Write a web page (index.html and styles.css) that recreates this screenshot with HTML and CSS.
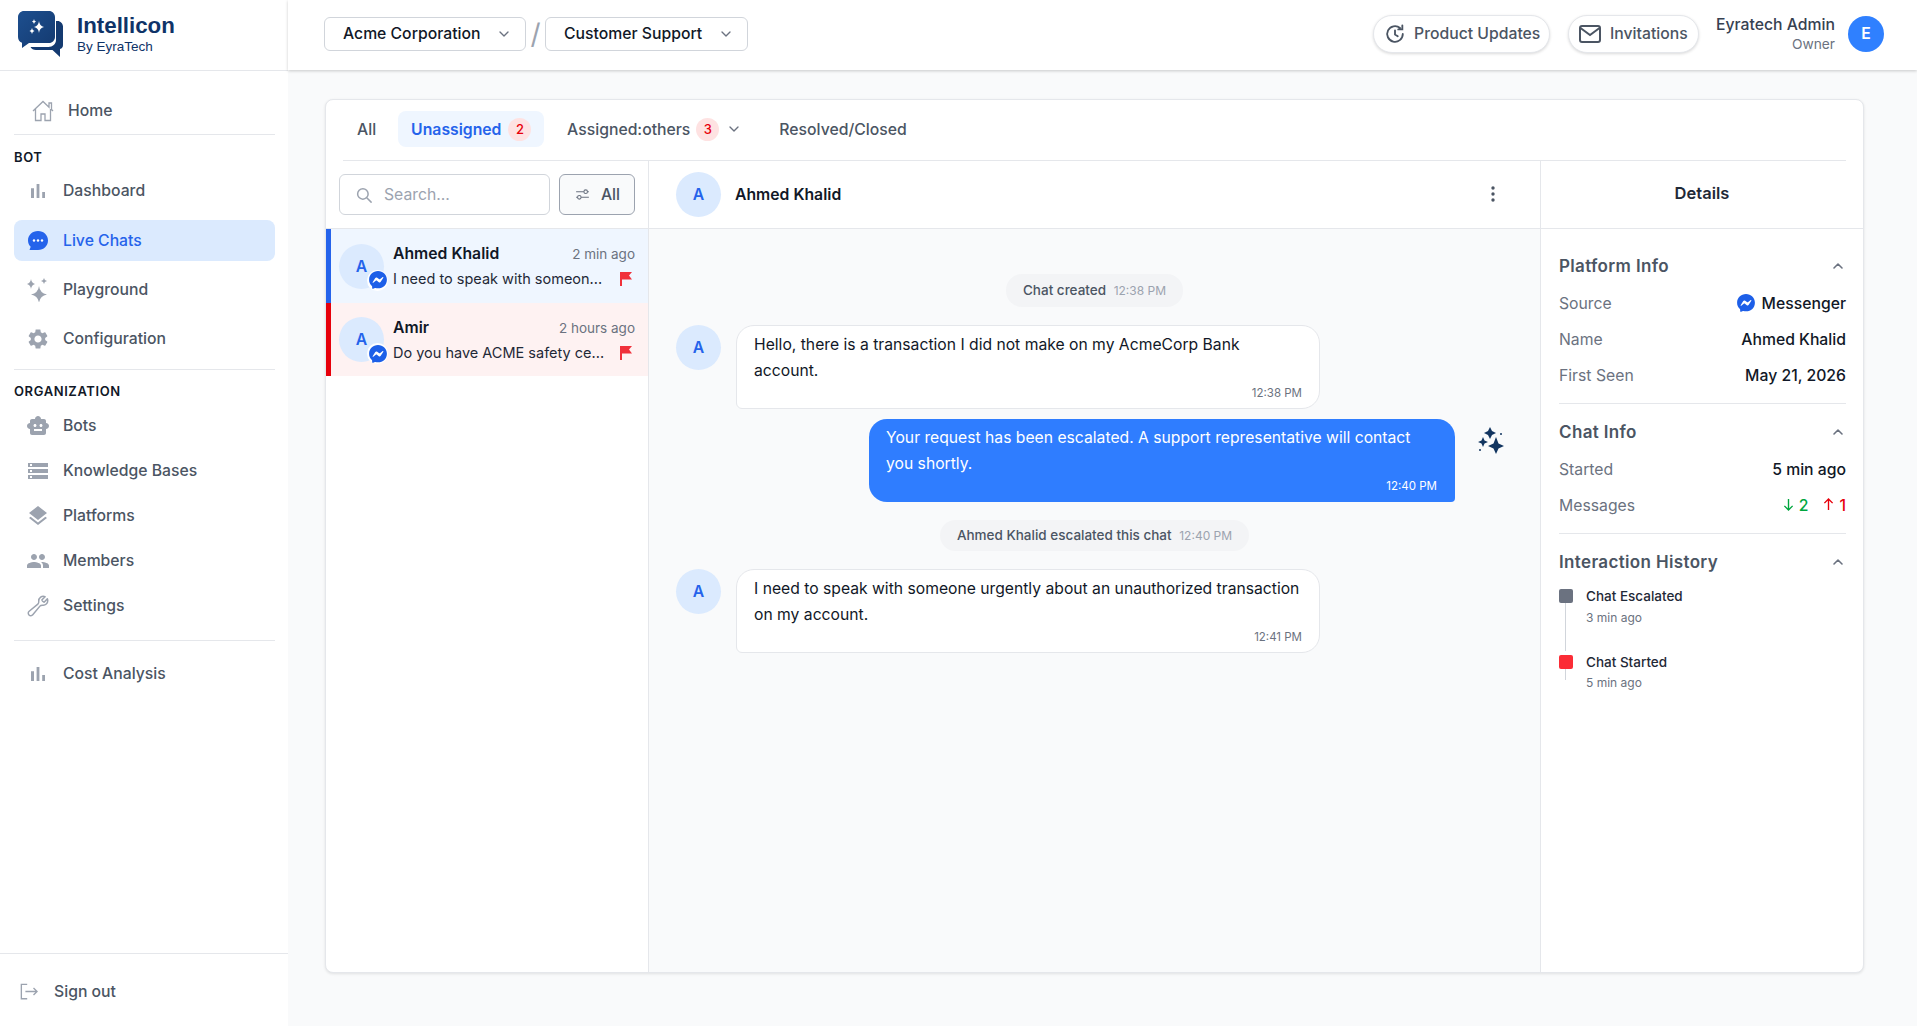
FILE: index.html
```html
<!DOCTYPE html>
<html lang="en">
<head>
  <meta charset="UTF-8">
  <title>Intellicon - Live Chats</title>
  <link rel="stylesheet" href="styles.css">
</head>
<body>
  <svg class="defs" width="0" height="0">
    <symbol id="i-bars" viewBox="0 0 24 24"><path d="M5 9.2h3V19H5zM10.6 5h2.800v14h-2.800zm5.600 8H19v6h-2.800z"/></symbol>
    <symbol id="i-gear" viewBox="0 0 24 24"><path d="M19.14 12.94c.04-.3.06-.61.06-.94 0-.32-.02-.64-.07-.94l2.03-1.58c.18-.14.23-.41.12-.61l-1.92-3.32c-.12-.22-.37-.29-.59-.22l-2.39.96c-.5-.38-1.03-.7-1.62-.94l-.36-2.54c-.04-.24-.24-.41-.48-.41h-3.84c-.24 0-.43.17-.47.41l-.36 2.54c-.59.24-1.13.57-1.62.94l-2.39-.96c-.22-.08-.47 0-.59.22L2.74 8.87c-.12.21-.08.47.12.61l2.03 1.58c-.05.3-.09.63-.09.94s.02.64.07.94l-2.03 1.58c-.18.14-.23.41-.12.61l1.92 3.32c.12.22.37.29.59.22l2.39-.96c.5.38 1.03.7 1.62.94l.36 2.54c.05.24.24.41.48.41h3.84c.24 0 .44-.17.47-.41l.36-2.54c.59-.24 1.13-.56 1.62-.94l2.39.96c.22.08.47 0 .59-.22l1.92-3.32c.12-.22.07-.47-.12-.61l-2.01-1.58zM12 15.6c-1.98 0-3.6-1.62-3.6-3.6s1.62-3.6 3.6-3.6 3.6 1.62 3.6 3.6-1.62 3.6-3.6 3.6z"/></symbol>
    <symbol id="i-bot" viewBox="0 0 24 24"><path d="M20 9V7c0-1.1-.9-2-2-2h-3c0-1.66-1.34-3-3-3S9 3.34 9 5H6c-1.1 0-2 .9-2 2v2c-1.66 0-3 1.34-3 3s1.34 3 3 3v4c0 1.1.9 2 2 2h12c1.1 0 2-.9 2-2v-4c1.66 0 3-1.34 3-3s-1.34-3-3-3zM7.5 11.5c0-.83.67-1.5 1.5-1.5s1.5.67 1.5 1.5S9.83 13 9 13s-1.5-.67-1.5-1.5zM16 17H8v-2h8v2zm-1-4c-.83 0-1.5-.67-1.5-1.5S14.17 10 15 10s1.5.67 1.5 1.5S15.83 13 15 13z"/></symbol>
    <symbol id="i-storage" viewBox="0 0 24 24"><path d="M2 20h20v-4H2v4zm2-3h2v2H4v-2zM2 4v4h20V4H2zm4 3H4V5h2v2zm-4 7h20v-4H2v4zm2-3h2v2H4v-2z"/></symbol>
    <symbol id="i-layers" viewBox="0 0 24 24"><path d="M11.99 18.54l-7.37-5.73L3 14.07l9 7 9-7-1.63-1.27-7.38 5.74zM12 16l7.36-5.73L21 9l-9-7-9 7 1.63 1.27L12 16z"/></symbol>
    <symbol id="i-people" viewBox="0 0 24 24"><path d="M16 11c1.66 0 2.99-1.34 2.99-3S17.66 5 16 5c-1.66 0-3 1.34-3 3s1.34 3 3 3zm-8 0c1.66 0 2.99-1.34 2.99-3S9.66 5 8 5C6.34 5 5 6.34 5 8s1.34 3 3 3zm0 2c-2.33 0-7 1.17-7 3.5V19h14v-2.5c0-2.33-4.67-3.5-7-3.5zm8 0c-.29 0-.62.02-.97.05 1.16.84 1.97 1.97 1.97 3.45V19h6v-2.5c0-2.33-4.67-3.5-7-3.5z"/></symbol>
    <symbol id="i-messenger" viewBox="2 2 20 20.200"><path d="M12 2C6.36 2 2 6.13 2 11.7c0 2.91 1.19 5.44 3.14 7.17.16.13.26.35.27.57l.05 1.78c.04.57.6.94 1.13.71l1.98-.87c.17-.06.36-.09.53-.06.9.27 1.9.4 2.9.4 5.64 0 10-4.13 10-9.7S17.64 2 12 2zm6 7.46l-2.94 4.67c-.47.73-1.47.92-2.17.37l-2.34-1.73a.6.6 0 0 0-.72 0l-3.16 2.4c-.42.33-.97-.17-.69-.62l2.94-4.67c.47-.73 1.47-.92 2.17-.4l2.34 1.76a.6.6 0 0 0 .72 0l3.16-2.4c.42-.33.97.17.69.62z"/></symbol>
    <symbol id="i-down" viewBox="0 0 24 24"><path d="M6 9l6 6 6-6" fill="none" stroke="currentColor" stroke-width="2" stroke-linecap="round" stroke-linejoin="round"/></symbol>
    <symbol id="i-up" viewBox="0 0 24 24"><path d="M6 15l6-6 6 6" fill="none" stroke="currentColor" stroke-width="2.400" stroke-linecap="round" stroke-linejoin="round"/></symbol>
    <symbol id="i-flag" viewBox="0 0 14 14"><path d="M1 0h12l-3 3.500L13 7.600H3V14H1z"/></symbol>
    <symbol id="i-sparkles" viewBox="0 0 27 27"><path d="M13 0l2 4 4 2-4 2-2 4-2-4-4-2 4-2zM19 10l2.500 6.500L27 19l-5.500 2.500L19 27l-2.500-5.500L11 19l5.500-2.500zM6 10l1.500 3.500L11 15l-3.500 1.500L6 20l-1.500-3.500L1 15l3.500-1.500z"/><circle cx="24" cy="7" r="1"/><circle cx="3" cy="23" r="1"/></symbol>
  </svg>

  <div class="app">
    <aside class="sidebar">
      <div class="brand">
        <svg class="brand-logo" viewBox="0 0 45 46">
          <defs>
            <linearGradient id="logo-grad" x1="0" y1="0" x2="1" y2="1">
              <stop offset="0" stop-color="#1d4f8f"/>
              <stop offset="1" stop-color="#143a70"/>
            </linearGradient>
          </defs>
          <path d="M38 10h1.500c3 0 5.500 2.500 5.500 5.500V34c0 2-1 3.500-3 4v8l-7.500-7H18c-2.500 0-4.500-1.200-5.500-3h18c4 0 7.500-3 7.500-7z" fill="#143a70"/>
          <path d="M6 0h25c3.300 0 6 2.700 6 6v20c0 3.300-2.700 6-6 6H11l-7 5v-5.300C1.700 31 0 29 0 26V6c0-3.300 2.700-6 6-6z" fill="url(#logo-grad)"/>
          <path d="M21 10Q21.500 15 26 16 21.500 17 21 22 20.500 17 16 16 20.500 15 21 10zM14 17Q14.300 19.500 16.500 20 14.300 20.500 14 23 13.700 20.500 11.500 20 13.700 19.500 14 17zM16 8Q16.200 10 18 10.500 16.200 11 16 13 15.800 11 14 10.500 15.800 10 16 8z" fill="#fff"/>
        </svg>
        <div>
          <div class="brand-name">Intellicon</div>
          <div class="brand-by">By EyraTech</div>
        </div>
      </div>

      <nav class="nav">
        <a class="nav-home">
          <svg class="icon-home" viewBox="0 0 24 24" fill="none" stroke="#9ca3af" stroke-width="1.300"><path d="M2 12L12 2.500l6 5.700V4h2.500v6.500L22 12M4.500 10v11.500h5.500V15h4v6.500h5.500V10"/></svg>
          Home
        </a>
        <hr class="nav-rule">

        <div class="nav-title">BOT</div>
        <a class="nav-item nav-dash"><svg class="nav-icon"><use href="#i-bars"/></svg>Dashboard</a>
        <a class="nav-item nav-live is-active">
          <svg class="nav-icon" viewBox="0 0 24 24"><path d="M12 2c5.800 0 10 4.200 10 9.500S17.800 21 12 21H3.500l1.200-3.200C3 16 2 14 2 11.500 2 6.200 6.200 2 12 2z" fill="#2563eb"/><circle cx="8" cy="11.500" r="1.200" fill="#fff"/><circle cx="12" cy="11.500" r="1.200" fill="#fff"/><circle cx="16" cy="11.500" r="1.200" fill="#fff"/></svg>
          Live Chats
        </a>
        <a class="nav-item nav-play"><svg class="nav-icon" viewBox="0 0 24 24"><path d="M13 8Q13.800 15 21 16.500 13.800 18 13 25 12.200 18 5 16.500 12.200 15 13 8zM5 1Q5.500 5 9 6 5.500 7 5 11 4.500 7 1 6 4.500 5 5 1zM18 0Q18.300 2.500 21 3 18.300 3.500 18 6 17.700 3.500 15 3 17.700 2.500 18 0z"/></svg>Playground</a>
        <a class="nav-item nav-conf"><svg class="nav-icon"><use href="#i-gear"/></svg>Configuration</a>
        <hr class="nav-rule nav-rule-org">

        <div class="nav-title nav-title-org">ORGANIZATION</div>
        <div class="nav-group">
          <a class="nav-item"><svg class="nav-icon"><use href="#i-bot"/></svg>Bots</a>
          <a class="nav-item"><svg class="nav-icon"><use href="#i-storage"/></svg>Knowledge Bases</a>
          <a class="nav-item"><svg class="nav-icon"><use href="#i-layers"/></svg>Platforms</a>
          <a class="nav-item"><svg class="nav-icon"><use href="#i-people"/></svg>Members</a>
          <a class="nav-item">
            <svg class="nav-icon nav-icon-line" viewBox="0 0 24 24"><path d="M21.750 6.750a4.500 4.500 0 01-4.884 4.484c-1.076-.091-2.264.071-2.950.904l-7.152 8.684a2.548 2.548 0 11-3.586-3.586l8.684-7.152c.833-.686.995-1.874.904-2.950a4.500 4.500 0 016.336-4.486l-3.276 3.276a3.004 3.004 0 002.250 2.250l3.276-3.276c.256.565.398 1.192.398 1.852z"/></svg>
            Settings
          </a>
        </div>
        <hr class="nav-rule nav-rule-last">
        <a class="nav-item"><svg class="nav-icon"><use href="#i-bars"/></svg>Cost Analysis</a>
      </nav>

      <a class="signout">
        <svg viewBox="0 0 20 18" fill="none" stroke="#9ca3af" stroke-width="1.500"><path d="M8 1H1.500v16H8M6 9h13M15 5l4 4-4 4"/></svg>
        Sign out
      </a>
    </aside>

    <div class="main">
      <header class="topbar">
        <div class="crumbs">
          <button class="select select-org">Acme Corporation<svg><use href="#i-down"/></svg></button>
          <span class="crumb-sep">/</span>
          <button class="select select-bot">Customer Support<svg><use href="#i-down"/></svg></button>
        </div>
        <div class="top-right">
          <button class="pill pill-updates">
            <svg viewBox="0 0 24 24" fill="none" stroke="#4b5563" stroke-width="2" stroke-linecap="round"><path d="M20.500 12a8.500 8.500 0 1 1-3-6.500M20 2.500V7h-4.500M12 8v4.500l3 2"/></svg>
            Product Updates
          </button>
          <button class="pill pill-invites">
            <svg viewBox="0 0 24 20" fill="none" stroke="#4b5563" stroke-width="2"><rect x="2" y="2" width="20" height="16" rx="2"/><path d="M2.500 4l9.500 7 9.500-7"/></svg>
            Invitations
          </button>
          <div class="user">
            <div class="user-name">Eyratech Admin</div>
            <div class="user-role">Owner</div>
          </div>
          <div class="user-avatar">E</div>
        </div>
      </header>

      <main class="content">
        <section class="card">
          <div class="tabs">
            <a class="tab tab-all">All</a>
            <a class="tab tab-active">Unassigned <span class="count">2</span></a>
            <a class="tab tab-others">Assigned:others <span class="count">3</span><svg class="tab-chevron"><use href="#i-down"/></svg></a>
            <a class="tab tab-resolved">Resolved/Closed</a>
          </div>

          <div class="panes">
            <div class="list-pane">
              <div class="list-tools">
                <div class="search">
                  <svg viewBox="0 0 24 24" fill="none" stroke="#9ca3af" stroke-width="2" stroke-linecap="round"><circle cx="10.500" cy="10.500" r="7"/><path d="M16 16l5.500 5.500"/></svg>
                  Search...
                </div>
                <button class="filter">
                  <svg viewBox="0 0 24 24" fill="none" stroke="#6b7280" stroke-width="1.500"><path d="M3 8h11M19 8h2M3 16h2M10 16h11"/><circle cx="16.500" cy="8" r="2.500"/><circle cx="7.500" cy="16" r="2.500"/></svg>
                  All
                </button>
              </div>

              <div class="conv conv-blue">
                <div class="avatar">A<span class="avatar-badge"><svg><use href="#i-messenger"/></svg></span></div>
                <div class="conv-body">
                  <div class="conv-top"><span class="conv-name">Ahmed Khalid</span><span class="conv-time">2 min ago</span></div>
                  <div class="conv-bottom"><span class="conv-text">I need to speak with someon...</span><svg class="conv-flag"><use href="#i-flag"/></svg></div>
                </div>
              </div>
              <div class="conv conv-red">
                <div class="avatar">A<span class="avatar-badge"><svg><use href="#i-messenger"/></svg></span></div>
                <div class="conv-body">
                  <div class="conv-top"><span class="conv-name">Amir</span><span class="conv-time">2 hours ago</span></div>
                  <div class="conv-bottom"><span class="conv-text">Do you have ACME safety ce...</span><svg class="conv-flag"><use href="#i-flag"/></svg></div>
                </div>
              </div>
            </div>

            <div class="chat-pane">
              <div class="chat-head">
                <div class="avatar">A</div>
                <span class="chat-name">Ahmed Khalid</span>
                <svg class="chat-more" viewBox="0 0 4 16" fill="#4b5563"><circle cx="2" cy="2" r="1.700"/><circle cx="2" cy="8" r="1.700"/><circle cx="2" cy="14" r="1.700"/></svg>
              </div>
              <div class="chat-log">
                <div class="sys sys-first"><span class="sys-pill">Chat created <small>12:38 PM</small></span></div>

                <div class="msg">
                  <div class="avatar">A</div>
                  <div class="bubble">
                    Hello, there is a transaction I did not make on my AcmeCorp Bank account.
                    <div class="stamp">12:38 PM</div>
                  </div>
                </div>

                <div class="msg msg-out">
                  <div class="bubble bubble-out">
                    Your request has been escalated. A support representative will contact you shortly.
                    <div class="stamp">12:40 PM</div>
                  </div>
                  <svg class="msg-ai"><use href="#i-sparkles"/></svg>
                </div>

                <div class="sys sys-mid"><span class="sys-pill">Ahmed Khalid escalated this chat <small>12:40 PM</small></span></div>

                <div class="msg">
                  <div class="avatar">A</div>
                  <div class="bubble">
                    I need to speak with someone urgently about an unauthorized transaction on my account.
                    <div class="stamp">12:41 PM</div>
                  </div>
                </div>
              </div>
            </div>

            <aside class="details-pane">
              <div class="details-head">Details</div>
              <div class="details-body">
                <div class="section">
                  <div class="section-head">Platform Info<svg><use href="#i-up"/></svg></div>
                  <div class="row"><span class="row-key">Source</span><span class="row-val row-source"><svg><use href="#i-messenger"/></svg>Messenger</span></div>
                  <div class="row"><span class="row-key">Name</span><span class="row-val">Ahmed Khalid</span></div>
                  <div class="row"><span class="row-key">First Seen</span><span class="row-val">May 21, 2026</span></div>
                </div>
                <div class="section">
                  <div class="section-head">Chat Info<svg><use href="#i-up"/></svg></div>
                  <div class="row"><span class="row-key">Started</span><span class="row-val">5 min ago</span></div>
                  <div class="row">
                    <span class="row-key">Messages</span>
                    <span class="row-val row-counts">
                      <span class="in">
                        <svg viewBox="0 0 12 14" fill="none" stroke="currentColor" stroke-width="1.500"><path d="M6 1v12M1.500 8.500L6 13l4.500-4.500"/></svg>2
                      </span>
                      <span class="out">
                        <svg viewBox="0 0 12 14" fill="none" stroke="currentColor" stroke-width="1.500"><path d="M6 13V1M1.500 5.500L6 1l4.500 4.500"/></svg>1
                      </span>
                    </span>
                  </div>
                </div>
                <div class="section section-last">
                  <div class="section-head">Interaction History<svg><use href="#i-up"/></svg></div>
                  <div class="event">
                    <span class="event-dot"></span>
                    <div>
                      <div class="event-title">Chat Escalated</div>
                      <div class="event-time">3 min ago</div>
                    </div>
                  </div>
                  <div class="event event-red">
                    <span class="event-dot"></span>
                    <div>
                      <div class="event-title">Chat Started</div>
                      <div class="event-time">5 min ago</div>
                    </div>
                  </div>
                </div>
              </div>
            </aside>
          </div>
        </section>
      </main>
    </div>
  </div>
</body>
</html>
```

FILE: styles.css
```css
* {
  box-sizing: border-box;
}

body {
  margin: 0;
  background: #f9fafb;
  color: #111827;
  font-family: Inter, "Noto Sans", sans-serif;
  font-size: 15.750px;
  overflow: hidden;
}

button {
  font: inherit;
  cursor: pointer;
}

.defs {
  display: none;
}

.app {
  display: flex;
  height: 1026px;
}

/* sidebar */
.sidebar {
  display: flex;
  flex-direction: column;
  flex: 0 0 288px;
  background: #fff;
}

.brand {
  display: flex;
  align-items: center;
  gap: 14px;
  height: 71px;
  padding: 0 0 2px 18px;
  border-bottom: 1px solid #e5e7eb;
}

.brand-logo {
  width: 45px;
  height: 46px;
}

.brand-name {
  color: #0f3368;
  font-family: "Liberation Sans", sans-serif;
  font-size: 22.300px;
  font-weight: 700;
  line-height: 25px;
}

.brand-by {
  color: #0f3368;
  font-family: "Liberation Sans", sans-serif;
  font-size: 13.500px;
  line-height: 17px;
}

.nav {
  flex: 1;
  padding: 21px 13px 0 14px;
}

.nav a {
  color: #4b5563;
  font-weight: 500;
}

.nav-home {
  display: flex;
  align-items: center;
  gap: 13px;
  height: 37px;
  padding-left: 17px;
}

.icon-home {
  width: 24px;
  height: 24px;
}

.nav-rule {
  height: 1px;
  margin: 5px 0 0;
  border: 0;
  background: #e5e7eb;
}

.nav-rule-org {
  margin-top: 10px;
}

.nav-title {
  margin-top: 14px;
  color: #111827;
  font-size: 13px;
  font-weight: 600;
  line-height: 16px;
  letter-spacing: 0.6px;
}

.nav-title-org {
  margin-top: 13px;
}

.nav-item {
  display: flex;
  align-items: center;
  gap: 13px;
  height: 41px;
  padding-left: 12px;
  border-radius: 8px;
}

.nav-icon {
  flex: 0 0 24px;
  width: 24px;
  height: 24px;
  fill: #9ca3af;
}

.nav-icon-line {
  fill: none;
  stroke: #9ca3af;
  stroke-width: 1.500;
  stroke-linejoin: round;
}

.nav-dash {
  margin-top: 5px;
}

.nav-live {
  margin-top: 9px;
}

.nav-play,
.nav-conf {
  margin-top: 8px;
}

.is-active {
  background: #dbeafe;
}

.nav a.is-active {
  color: #2563eb;
}

.nav-group {
  margin-top: 8px;
}

.nav-group .nav-item {
  height: 37px;
  margin-bottom: 8px;
}

.nav-rule-last {
  margin: 16px 0 12px;
}

.signout {
  display: flex;
  align-items: center;
  gap: 16px;
  height: 73px;
  padding: 2px 0 0 20px;
  border-top: 1px solid #e5e7eb;
  color: #4b5563;
  font-weight: 500;
}

.signout svg {
  width: 18px;
  height: 17px;
}

/* top bar */
.main {
  display: flex;
  flex-direction: column;
  flex: 1;
  min-width: 0;
}

.topbar {
  display: flex;
  align-items: center;
  justify-content: space-between;
  flex: 0 0 70px;
  padding: 0 33px 3px 36px;
  background: #fff;
  box-shadow: 0 1px 3px rgba(0, 0, 0, 0.2);
}

.crumbs {
  display: flex;
  align-items: center;
}

.select {
  display: flex;
  align-items: center;
  justify-content: space-between;
  height: 34px;
  padding: 0 13px 0 18px;
  background: #fff;
  border: 1px solid #d1d5db;
  border-radius: 6px;
  color: #111827;
  font-weight: 500;
}

.select svg {
  width: 16px;
  height: 16px;
  color: #6b7280;
}

.select-org {
  width: 202px;
}

.select-bot {
  width: 203px;
}

.crumb-sep {
  width: 19px;
  color: #9ca3af;
  font-size: 28px;
  line-height: 30px;
  text-align: center;
}

.top-right {
  display: flex;
  align-items: center;
}

.pill {
  display: flex;
  align-items: center;
  height: 38px;
  background: #fff;
  border: 1px solid #e5e7eb;
  border-radius: 19px;
  box-shadow: 0 1px 3px rgba(0, 0, 0, 0.15);
  color: #4b5563;
  font-weight: 500;
}

.pill-updates {
  gap: 8px;
  width: 177px;
  padding-left: 10px;
}

.pill-updates svg {
  width: 22px;
  height: 22px;
}

.pill-invites {
  gap: 8px;
  width: 131px;
  margin-left: 18px;
  padding-left: 9px;
}

.pill-invites svg {
  width: 24px;
  height: 20px;
}

.user {
  margin-left: 17px;
  text-align: right;
}

.user-name {
  color: #374151;
  font-weight: 500;
  line-height: 20px;
}

.user-role {
  color: #6b7280;
  font-size: 13.750px;
  line-height: 18px;
}

.user-avatar {
  display: flex;
  align-items: center;
  justify-content: center;
  width: 36px;
  height: 36px;
  margin-left: 13px;
  background: #2f80ff;
  border-radius: 50%;
  color: #fff;
  font-weight: 600;
}

/* card */
.content {
  flex: 1;
  min-height: 0;
  padding: 29px 53px 53px 37px;
}

.card {
  display: flex;
  flex-direction: column;
  height: 100%;
  background: #fff;
  border: 1px solid #e5e7eb;
  border-radius: 8px;
  box-shadow: 0 1px 3px rgba(0, 0, 0, 0.1);
}

.tabs {
  display: flex;
  align-items: center;
  flex: 0 0 61px;
  margin: 0 17px;
  padding-bottom: 2px;
  border-bottom: 1px solid #e5e7eb;
  color: #4b5563;
  font-weight: 500;
}

.tab {
  display: flex;
  align-items: center;
  height: 36px;
}

.tab-all {
  margin-left: 14px;
}

.tab-active {
  gap: 7px;
  width: 146px;
  margin-left: 22px;
  padding-left: 13px;
  background: #eff6ff;
  border-radius: 8px;
  color: #2563eb;
  font-weight: 600;
}

.tab-others {
  gap: 6px;
  margin-left: 23px;
}

.tab-chevron {
  width: 16px;
  height: 16px;
  margin-left: 1px;
  color: #6b7280;
}

.tab-resolved {
  margin-left: 37px;
}

.count {
  display: flex;
  align-items: center;
  justify-content: center;
  width: 23px;
  height: 23px;
  background: #fee2e2;
  border-radius: 50%;
  color: #e7000b;
  font-size: 13px;
  font-weight: 500;
}

.panes {
  display: flex;
  flex: 1;
  min-height: 0;
}

.avatar {
  position: relative;
  display: flex;
  align-items: center;
  justify-content: center;
  flex: 0 0 45px;
  width: 45px;
  height: 45px;
  background: #dbeafe;
  border-radius: 50%;
  color: #2563eb;
  font-weight: 600;
}

/* conversation list */
.list-pane {
  flex: 0 0 323px;
  border-right: 1px solid #e5e7eb;
}

.list-tools {
  display: flex;
  align-items: center;
  gap: 9px;
  height: 68px;
  padding: 0 13px;
  border-bottom: 1px solid #e5e7eb;
}

.search {
  display: flex;
  align-items: center;
  gap: 11px;
  flex: 0 0 211px;
  height: 41px;
  padding-left: 15px;
  border: 1px solid #d1d5db;
  border-radius: 6px;
  color: #9ca3af;
}

.search svg {
  width: 18px;
  height: 18px;
}

.filter {
  display: flex;
  align-items: center;
  justify-content: center;
  gap: 10px;
  flex: 0 0 76px;
  height: 41px;
  padding: 0;
  background: #f9fafb;
  border: 1px solid #9ca3af;
  border-radius: 6px;
  color: #4b5563;
  font-weight: 500;
}

.filter svg {
  width: 17px;
  height: 17px;
}

.conv {
  display: flex;
  align-items: center;
  gap: 9px;
  height: 74px;
  padding: 0 13px 0 8px;
  border-left: 5px solid;
}

.conv-blue {
  background: #eff6ff;
  border-color: #2563eb;
}

.conv-red {
  background: #fef2f2;
  border-color: #e7000b;
  height: 73px;
}

.avatar-badge {
  position: absolute;
  right: -4px;
  bottom: -2px;
  display: flex;
  width: 21px;
  height: 21px;
  padding: 1.500px;
  background: #fff;
  border-radius: 50%;
}

.avatar-badge svg {
  width: 18px;
  height: 18px;
  fill: #1d5fe8;
}

.conv-body {
  flex: 1;
  min-width: 0;
  padding-top: 1px;
}

.conv-top,
.conv-bottom {
  display: flex;
  align-items: center;
  justify-content: space-between;
}

.conv-top {
  margin-bottom: 5px;
  line-height: 20px;
}

.conv-name {
  font-weight: 600;
}

.conv-time {
  color: #6b7280;
  font-size: 13.500px;
}

.conv-bottom {
  line-height: 20px;
}

.conv-text {
  color: #1f2937;
  font-size: 14.500px;
}

.conv-flag {
  width: 14px;
  height: 14px;
  margin-right: 2px;
  fill: #f0313b;
}

/* chat */
.chat-pane {
  display: flex;
  flex-direction: column;
  flex: 1;
  min-width: 0;
}

.chat-head {
  display: flex;
  align-items: center;
  flex: 0 0 68px;
  padding: 0 45px 1px 27px;
  border-bottom: 1px solid #e5e7eb;
}

.chat-name {
  flex: 1;
  margin-left: 14px;
  font-weight: 600;
}

.chat-more {
  width: 4px;
  height: 16px;
}

.chat-log {
  flex: 1;
  padding: 45px 0 0 27px;
  background: #f9fafb;
}

.sys {
  display: flex;
  justify-content: center;
  padding-right: 27px;
}

.sys-pill {
  padding: 0 17px;
  background: #f3f4f6;
  border-radius: 16px;
  color: #4b5563;
  font-size: 13.500px;
  font-weight: 500;
  line-height: 32px;
}

.sys-pill small {
  margin-left: 4px;
  color: #9ca3af;
  font-size: 12px;
  font-weight: 400;
}

.sys-first {
  margin-bottom: 18px;
}

.sys-mid {
  margin: 18px 0;
}

.sys-mid .sys-pill {
  line-height: 31px;
}

.msg {
  display: flex;
  gap: 15px;
}

.bubble {
  width: 584px;
  height: 84px;
  padding: 6px 14px 0 17px;
  background: #fff;
  border: 1px solid #e5e7eb;
  border-radius: 18px 18px 18px 6px;
  font-size: 15.700px;
  line-height: 26px;
}

.stamp {
  margin: 1.500px 3px 0 0;
  color: #6b7280;
  font-size: 11.500px;
  line-height: 15px;
  text-align: right;
}

.msg-out {
  align-items: flex-start;
  gap: 22px;
  margin-top: 10px;
  padding-left: 193px;
}

.bubble-out {
  width: 586px;
  height: 83px;
  background: #2f7dff;
  border: 0;
  border-radius: 18px 18px 4px 18px;
  color: #fff;
}

.bubble-out .stamp {
  margin-right: 4px;
  color: #fff;
}

.msg-ai {
  flex: 0 0 27px;
  width: 27px;
  height: 27px;
  margin-top: 8px;
  fill: #123560;
}

/* details */
.details-pane {
  display: flex;
  flex-direction: column;
  flex: 0 0 323px;
  border-left: 1px solid #e5e7eb;
}

.details-head {
  flex: 0 0 68px;
  border-bottom: 1px solid #e5e7eb;
  color: #1f2937;
  font-size: 16.500px;
  font-weight: 600;
  line-height: 64px;
  text-align: center;
}

.details-body {
  padding: 0 17px 0 18px;
}

.section {
  padding: 25px 0 10px;
  border-bottom: 1px solid #e5e7eb;
}

.section + .section {
  padding-top: 16px;
}

.section-last {
  border-bottom: 0;
}

.section-head {
  display: flex;
  align-items: center;
  justify-content: space-between;
  margin-bottom: 7px;
  color: #4b5563;
  font-size: 17px;
  font-weight: 600;
  letter-spacing: 0.35px;
  line-height: 24px;
}

.section-head svg {
  width: 16px;
  height: 16px;
  color: #6b7280;
}

.row {
  display: flex;
  align-items: center;
  justify-content: space-between;
  height: 36px;
}

.row-key {
  color: #6b7280;
}

.row-val {
  color: #111827;
  font-weight: 500;
}

.row-source {
  display: flex;
  align-items: center;
  gap: 7px;
}

.row-source svg {
  width: 18px;
  height: 18px;
  fill: #1d5fe8;
}

.row-counts {
  display: flex;
  gap: 15px;
}

.row-counts svg {
  width: 11px;
  height: 13px;
  margin-right: 5px;
}

.in {
  color: #00a63e;
}

.out {
  color: #e7000b;
}

.event {
  position: relative;
  display: flex;
  gap: 13px;
  height: 66px;
  padding-top: 3px;
}

.section-head + .event {
  margin-top: 11px;
}

.event-dot {
  flex: 0 0 14px;
  height: 14px;
  margin-top: 1px;
  background: #6b7280;
  border-radius: 2px;
}

.event::after {
  content: "";
  position: absolute;
  left: 6px;
  top: 18px;
  bottom: 0;
  width: 1px;
  background: #d1d5db;
}

.event-red .event-dot {
  background: #fb2c36;
}

.event-red::after {
  bottom: 37px;
}

.event-title {
  color: #1f2937;
  font-size: 13.500px;
  font-weight: 500;
  line-height: 16px;
}

.event-time {
  margin-top: 6px;
  color: #6b7280;
  font-size: 12px;
  line-height: 15px;
}

.event-red .event-time {
  margin-top: 5px;
}
```
